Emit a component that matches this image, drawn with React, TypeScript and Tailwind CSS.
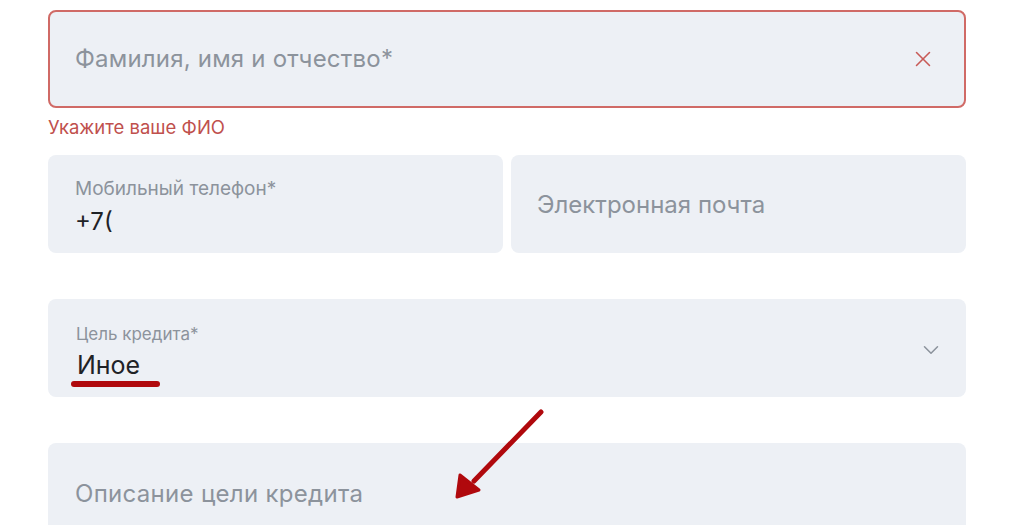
import { X, ChevronDown } from "lucide-react";

const font = { fontFamily: "Inter, 'Noto Sans', sans-serif" };

export default function App() {
  return (
    <div className="relative w-[1030px] h-[525px] overflow-hidden bg-white" style={font}>
      <div className="flex flex-col pl-[48px] w-[966px]">
        {/* ФИО с ошибкой */}
        <div className="mt-[10px] h-[98px] rounded-[8px] border-2 border-[#d06a66] bg-[#edf0f5] flex items-center justify-between pl-[25px] pr-[28px]">
          <span className="text-[24px] tracking-[0.2px] text-[#8c939c]">Фамилия, имя и отчество*</span>
          <X className="w-[26px] h-[26px] text-[#c85a57]" strokeWidth={1.4} />
        </div>
        <div className="mt-[8px] text-[18.5px] leading-[22px] text-[#c0504d]">Укажите ваше ФИО</div>

        {/* телефон и почта */}
        <div className="mt-[17px] grid grid-cols-2 gap-[8px]">
          <div className="h-[98px] rounded-[8px] bg-[#edf0f5] flex flex-col justify-center pl-[27px] pt-[6px]">
            <span className="text-[19px] leading-[22px] text-[#8c939c]">Мобильный телефон*</span>
            <span className="mt-[8px] text-[24px] leading-[28px] text-[#1f2226]">+7(</span>
          </div>
          <div className="h-[98px] rounded-[8px] bg-[#edf0f5] flex items-center pl-[26px] pt-[2px]">
            <span className="text-[24px] text-[#8c939c]">Электронная почта</span>
          </div>
        </div>

        {/* цель кредита */}
        <div className="mt-[46px] h-[98px] rounded-[8px] bg-[#edf0f5] flex items-center justify-between pl-[28px] pr-[22px]">
          <div className="flex flex-col pt-[8px]">
            <span className="text-[17px] leading-[20px] text-[#8c939c]">Цель кредита*</span>
            <span className="relative mt-[6px] ml-[1px] text-[25px] leading-[30px] text-[#1f2226]">
              Иное
              <span className="absolute left-[-6px] top-[31px] w-[89px] h-[6px] rounded-full bg-[#b0090d]" />
            </span>
          </div>
          <ChevronDown className="w-[26px] h-[26px] mt-[4px] text-[#8c939c]" strokeWidth={1.4} />
        </div>

        {/* описание */}
        <div className="mt-[46px] h-[98px] rounded-[8px] bg-[#edf0f5] flex items-center pl-[27px] pt-[4px]">
          <span className="text-[24px] tracking-[0.3px] text-[#8c939c]">Описание цели кредита</span>
        </div>
      </div>

      {/* стрелка-указатель */}
      <svg className="absolute left-0 top-0" width="1030" height="525" viewBox="0 0 1030 525">
        <line x1="541" y1="412" x2="474" y2="481" stroke="#b0090d" strokeWidth="5" strokeLinecap="round" />
        <polygon points="457,497 460,475 479,490" fill="#b0090d" stroke="#b0090d" strokeWidth="3" strokeLinejoin="round" />
      </svg>
    </div>
  );
}
